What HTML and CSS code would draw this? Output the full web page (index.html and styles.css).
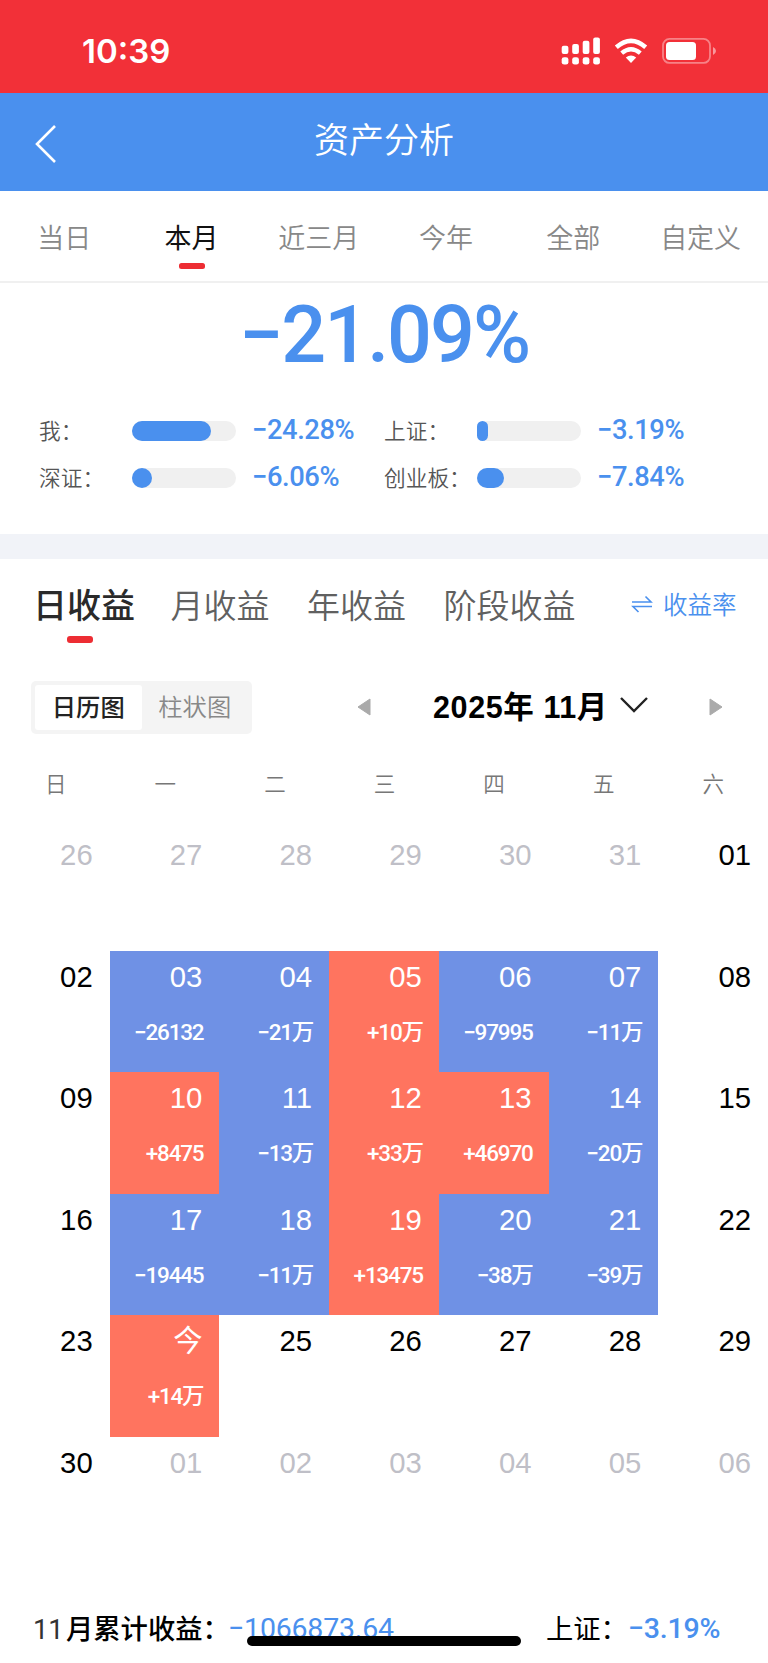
FILE: index.html
```html
<!DOCTYPE html>
<html lang="zh-CN">
<head>
    <meta charset="UTF-8">
    <title>资产分析</title>
    <link rel="stylesheet" href="styles.css">
</head>
<body>
<div class="status">
    <span class="time">10:39</span>
    <svg class="status-icons" width="156" height="30" viewBox="0 0 156 30">
        <g fill="#fff">
            <rect x="1.7" y="9.7" width="6.7" height="8.3" rx="2"/>
            <rect x="12.2" y="8" width="6.7" height="10" rx="2"/>
            <rect x="22.7" y="4.8" width="6.7" height="13.2" rx="2"/>
            <rect x="33.2" y="1.4" width="6.7" height="16.6" rx="2"/>
            <rect x="1.7" y="21.2" width="6.7" height="7.4" rx="2.4"/>
            <rect x="12.2" y="21.2" width="6.7" height="7.4" rx="2.4"/>
            <rect x="22.7" y="21.2" width="6.7" height="7.4" rx="2.4"/>
            <rect x="33.2" y="21.2" width="6.7" height="7.4" rx="2.4"/>
            <path d="M71 27 L65.8 21.6 Q71 17.6 76.2 21.6 Z"/>
        </g>
        <path d="M56.3 11.2 Q71 -1.6 85.7 11.2" fill="none" stroke="#fff" stroke-width="4.5"/>
        <path d="M61.7 17.2 Q71 9.2 80.3 17.2" fill="none" stroke="#fff" stroke-width="4.3"/>
        <rect x="103" y="2.9" width="47" height="24" rx="6.5" fill="none" stroke="#fff" stroke-opacity=".4" stroke-width="1.8"/>
        <rect x="106" y="6" width="30" height="18" rx="3.5" fill="#fff"/>
        <path d="M153 11 Q156 12.5 156 15 Q156 17.5 153 19 Z" fill="#fff" fill-opacity=".5"/>
    </svg>
</div>
<div class="header">
    <svg class="back" width="24" height="40" viewBox="0 0 24 40">
        <path d="M21 2 L3 20 L21 38" fill="none" stroke="#fff" stroke-width="2.6"/>
    </svg>
    <h1>资产分析</h1>
</div>
<div class="range">
    <div class="range-item">当日</div>
    <div class="range-item active">本月</div>
    <div class="range-item">近三月</div>
    <div class="range-item">今年</div>
    <div class="range-item">全部</div>
    <div class="range-item">自定义</div>
</div>
<div class="summary">
    <div class="total">−21.09%</div>
    <div class="compare">
        <div class="compare-item">
            <span class="name">我：</span>
            <div class="bar"><div class="fill" style="width:79px"></div></div>
            <span class="rate">−24.28%</span>
        </div>
        <div class="compare-item">
            <span class="name">上证：</span>
            <div class="bar"><div class="fill" style="width:11px"></div></div>
            <span class="rate">−3.19%</span>
        </div>
        <div class="compare-item">
            <span class="name">深证：</span>
            <div class="bar"><div class="fill" style="width:20px"></div></div>
            <span class="rate">−6.06%</span>
        </div>
        <div class="compare-item">
            <span class="name">创业板：</span>
            <div class="bar"><div class="fill" style="width:26.5px"></div></div>
            <span class="rate">−7.84%</span>
        </div>
    </div>
</div>
<div class="profit-tabs">
    <div class="profit-tab active">日收益</div>
    <div class="profit-tab">月收益</div>
    <div class="profit-tab">年收益</div>
    <div class="profit-tab">阶段收益</div>
    <div class="switch">
        <svg width="22" height="18" viewBox="0 0 22 18">
            <path d="M1 7 H20 L14.5 1.5 M21 11.5 H2 L7.5 17" fill="none" stroke="#4a90ee" stroke-width="1.6"/>
        </svg>
        收益率
    </div>
</div>
<div class="toolbar">
    <div class="segment">
        <div class="segment-item active">日历图</div>
        <div class="segment-item">柱状图</div>
    </div>
    <svg class="prev" width="14" height="18" viewBox="0 0 14 18">
        <path d="M13 1 V17 L1 9 Z" fill="#aaa" stroke="#aaa" stroke-linejoin="round"/>
    </svg>
    <div class="month">2025年 11月</div>
    <svg class="down" width="28" height="18" viewBox="0 0 28 18">
        <path d="M1 2 L14 15 L27 2" fill="none" stroke="#222" stroke-width="2.4"/>
    </svg>
    <svg class="next" width="14" height="18" viewBox="0 0 14 18">
        <path d="M1 1 V17 L13 9 Z" fill="#aaa" stroke="#aaa" stroke-linejoin="round"/>
    </svg>
</div>
<div class="week">
    <div>日</div><div>一</div><div>二</div><div>三</div><div>四</div><div>五</div><div>六</div>
</div>
<div class="calendar">
    <div class="day other">26</div>
    <div class="day other">27</div>
    <div class="day other">28</div>
    <div class="day other">29</div>
    <div class="day other">30</div>
    <div class="day other">31</div>
    <div class="day">01</div>

    <div class="day">02</div>
    <div class="day down-day">03<span class="amount">−26132</span></div>
    <div class="day down-day">04<span class="amount">−21万</span></div>
    <div class="day up-day">05<span class="amount">+10万</span></div>
    <div class="day down-day">06<span class="amount">−97995</span></div>
    <div class="day down-day">07<span class="amount">−11万</span></div>
    <div class="day">08</div>

    <div class="day">09</div>
    <div class="day up-day">10<span class="amount">+8475</span></div>
    <div class="day down-day">11<span class="amount">−13万</span></div>
    <div class="day up-day">12<span class="amount">+33万</span></div>
    <div class="day up-day">13<span class="amount">+46970</span></div>
    <div class="day down-day">14<span class="amount">−20万</span></div>
    <div class="day">15</div>

    <div class="day">16</div>
    <div class="day down-day">17<span class="amount">−19445</span></div>
    <div class="day down-day">18<span class="amount">−11万</span></div>
    <div class="day up-day">19<span class="amount">+13475</span></div>
    <div class="day down-day">20<span class="amount">−38万</span></div>
    <div class="day down-day">21<span class="amount">−39万</span></div>
    <div class="day">22</div>

    <div class="day">23</div>
    <div class="day up-day">今<span class="amount">+14万</span></div>
    <div class="day">25</div>
    <div class="day">26</div>
    <div class="day">27</div>
    <div class="day">28</div>
    <div class="day">29</div>

    <div class="day">30</div>
    <div class="day other">01</div>
    <div class="day other">02</div>
    <div class="day other">03</div>
    <div class="day other">04</div>
    <div class="day other">05</div>
    <div class="day other">06</div>
</div>
<div class="footer">
    <span class="sum-name"><span class="sum-month">11</span>月累计收益：</span>
    <span class="sum">−1066873.64</span>
    <span class="index-name">上证：</span>
    <span class="sum">−3.19%</span>
</div>
<div class="home-bar"></div>
</body>
</html>
```
FILE: styles.css
```css
*{
    box-sizing: border-box;
}
body{
    margin: 0;
    width: 768px;
    height: 1663px;
    position: relative;
    overflow: hidden;
    background: #fff;
    font-family: "Noto Sans CJK SC", sans-serif;
    white-space: nowrap;
}
svg{
    display: block;
    flex: none;
}
.status{
    height: 92.5px;
    background: #f23038;
    display: flex;
    justify-content: space-between;
    padding: 31px 52px 0 82px;
}
.time{
    font: 600 33px/41px Inter, sans-serif;
    color: #fff;
}
.status-icons{
    margin-top: 5px;
}
.header{
    height: 98px;
    background: #4a90ee;
    display: flex;
    padding-left: 34px;
}
.back{
    margin-top: 31px;
}
.header h1{
    flex: 1;
    margin: 0;
    padding-right: 58px;
    text-align: center;
    font-size: 35px;
    font-weight: 350;
    line-height: 90px;
    color: #fff;
}
.range{
    height: 92.5px;
    padding-left: 2px;
    border-bottom: 2px solid #f0f0f0;
    display: flex;
}
.range-item{
    width: 127.3px;
    padding-right: 3px;
    text-align: center;
    font-size: 27px;
    font-weight: 350;
    line-height: 92px;
    color: #888;
}
.range-item.active{
    color: #111;
    font-weight: 400;
}
.range-item.active::after{
    content: "";
    display: block;
    width: 26px;
    height: 6.5px;
    margin: -20px 0 0 50px;
    border-radius: 2.5px;
    background: #ed2d33;
}
.summary{
    height: 276px;
    border-bottom: 25px solid #f1f3f8;
}
.total{
    height: 125px;
    text-align: center;
    font: 500 79px/104px Roboto, sans-serif;
    letter-spacing: -2px;
    color: #4a90ee;
}
.compare{
    display: grid;
    grid-template-columns: 345px 345px;
    grid-auto-rows: 47px;
    padding-left: 39px;
}
.compare-item{
    display: flex;
    align-items: center;
    height: 46px;
}
.name{
    width: 93px;
    font-size: 21.7px;
    font-weight: 350;
    line-height: 43px;
    height: 46px;
    color: #555;
}
.bar{
    width: 104px;
    height: 20px;
    border-radius: 10px;
    background: #f0f0f0;
}
.fill{
    height: 20px;
    border-radius: 10px;
    background: #4a90ee;
}
.rate{
    height: 46px;
    margin-left: 16px;
    font: 500 27.3px/44px Roboto, sans-serif;
    letter-spacing: -.4px;
    color: #4a90ee;
}
.profit-tabs{
    display: flex;
    height: 121px;
    padding-left: 33px;
}
.profit-tab{
    margin-right: 37.5px;
    font-size: 33px;
    font-weight: 350;
    line-height: 90px;
    color: #606060;
}
.profit-tab.active{
    width: 100px;
    font-size: 34px;
    font-weight: 500;
    color: #2a2a2a;
}
.profit-tab.active::after{
    content: "";
    display: block;
    width: 26px;
    height: 7px;
    margin: -13px 0 0 34px;
    border-radius: 3px;
    background: #ed2d33;
}
.switch{
    display: flex;
    align-items: center;
    gap: 10px;
    height: 89px;
    margin-left: 18px;
    font-size: 24.5px;
    font-weight: 350;
    color: #4a90ee;
}
.toolbar{
    display: flex;
    align-items: center;
    height: 54px;
    padding-left: 31px;
}
.segment{
    display: flex;
    width: 221px;
    height: 53px;
    padding: 4px;
    border-radius: 5px;
    background: #f4f4f4;
}
.segment-item{
    width: 107px;
    height: 45px;
    border-radius: 3px;
    text-align: center;
    font-size: 24.3px;
    font-weight: 350;
    line-height: 42px;
    color: #888;
}
.segment-item.active{
    background: #fff;
    font-weight: 500;
    color: #222;
}
.prev{
    margin-left: 105px;
}
.month{
    width: 187px;
    margin-left: 62px;
    font: bold 30.5px/46px "Liberation Sans", "Noto Sans CJK SC", sans-serif;
    letter-spacing: .6px;
    color: #000;
}
.down{
    margin-top: -4px;
}
.next{
    margin-left: 61px;
}
.week{
    display: grid;
    grid-template-columns: repeat(7, 1fr);
    height: 95px;
    padding-left: 1px;
    text-align: center;
    font-size: 21.5px;
    font-weight: 350;
    line-height: 97px;
    color: #777;
}
.calendar{
    display: grid;
    grid-template-columns: repeat(7, 1fr);
    grid-auto-rows: 121.5px;
    height: 730px;
}
.day{
    padding: 4px 17px 0 0;
    text-align: right;
    font: 29.3px/43px "Liberation Sans", "Noto Sans CJK SC", sans-serif;
    color: #000;
}
.day.other{
    color: #bfbfc7;
}
.up-day{
    background: #ff745f;
    color: #fff;
}
.down-day{
    background: #6f91e5;
    color: #fff;
}
.amount{
    display: block;
    margin: 13px -1px 0 -10px;
    font: 500 22.5px/43px Roboto, "Noto Sans CJK SC", sans-serif;
    letter-spacing: -1.2px;
}
.footer{
    display: flex;
    height: 104px;
    padding: 49px 0 0 33px;
    font-size: 27.3px;
    line-height: 38px;
    color: #000;
}
.sum-name{
    width: 195px;
    font-weight: 500;
}
.sum-month{
    display: inline-block;
    width: 33px;
    font-family: Roboto, sans-serif;
    font-weight: 400;
    color: #333;
}
.sum{
    font-family: Roboto, sans-serif;
    font-size: 28.5px;
    line-height: 42px;
    letter-spacing: -.2px;
    color: #4a90ee;
}
.index-name{
    width: 82px;
    margin-left: auto;
}
.index-name + .sum{
    width: 140px;
    font-weight: 500;
}
.home-bar{
    position: absolute;
    left: 247px;
    top: 1636px;
    width: 274px;
    height: 10px;
    border-radius: 5px;
    background: #000;
}
```
